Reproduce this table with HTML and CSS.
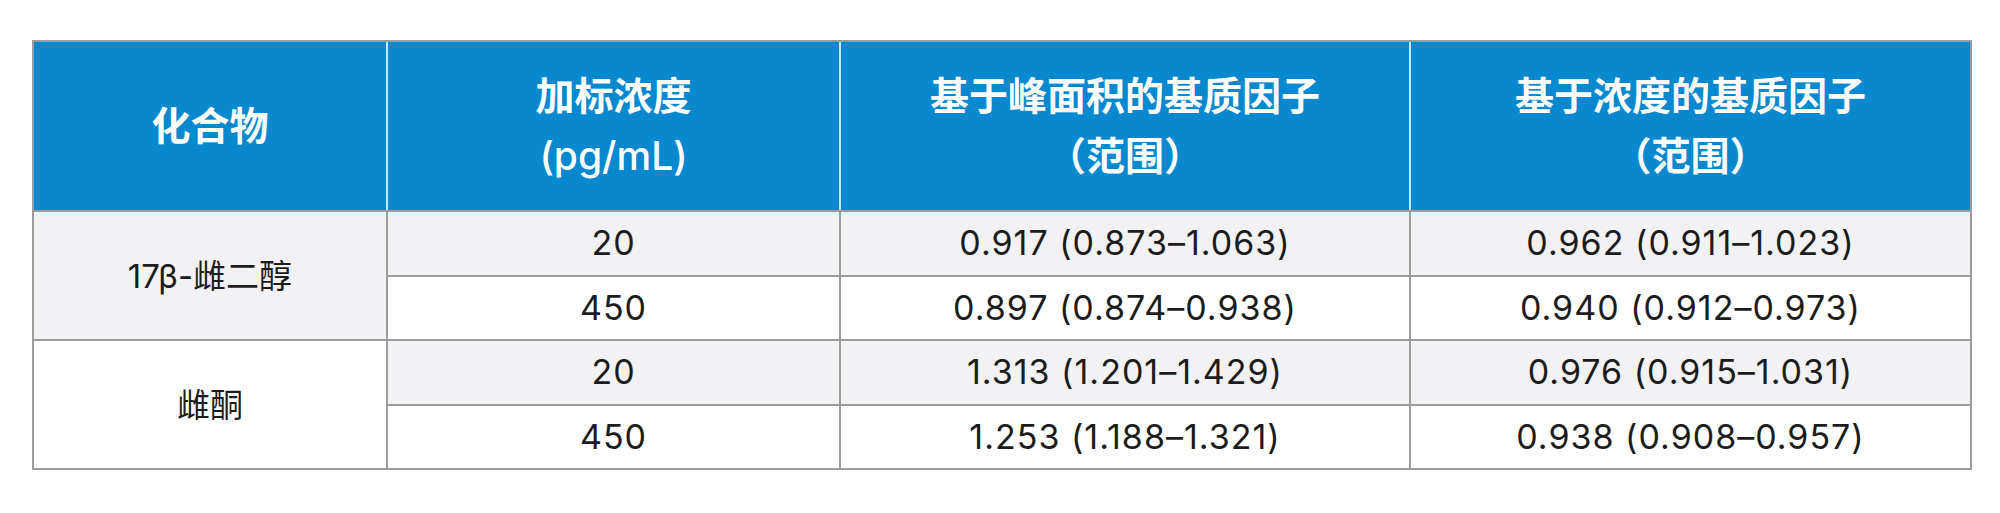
FILE: index.html
```html
<!DOCTYPE html>
<html lang="zh-CN">
<head>
<meta charset="utf-8">
<title>基质因子</title>
<link rel="stylesheet" href="styles.css">
</head>
<body>
<table class="mf">
  <colgroup>
    <col class="c1"><col class="c2"><col class="c3"><col class="c4">
  </colgroup>
  <thead>
    <tr class="head">
      <th>化合物</th>
      <th>加标浓度<br><span class="unit">(pg/mL)</span></th>
      <th>基于峰面积的基质因子<br>（范围）</th>
      <th>基于浓度的基质因子<br>（范围）</th>
    </tr>
  </thead>
  <tbody>
    <tr class="shade">
      <td rowspan="2" class="name">17β-雌二醇</td>
      <td class="num">20</td>
      <td class="num">0.917 (0.873–1.063)</td>
      <td class="num">0.962 (0.911–1.023)</td>
    </tr>
    <tr>
      <td class="num">450</td>
      <td class="num">0.897 (0.874–0.938)</td>
      <td class="num">0.940 (0.912–0.973)</td>
    </tr>
    <tr class="shade">
      <td rowspan="2" class="name plain">雌酮</td>
      <td class="num">20</td>
      <td class="num">1.313 (1.201–1.429)</td>
      <td class="num">0.976 (0.915–1.031)</td>
    </tr>
    <tr>
      <td class="num">450</td>
      <td class="num">1.253 (1.188–1.321)</td>
      <td class="num">0.938 (0.908–0.957)</td>
    </tr>
  </tbody>
</table>
</body>
</html>
```
FILE: styles.css
```css
html, body {
  margin: 0;
  padding: 0;
  background: #ffffff;
}
body {
  padding: 40px 0 0 32px;
  font-family: Inter, "Noto Sans CJK SC", sans-serif;
}
.mf {
  border-collapse: collapse;
  table-layout: fixed;
  width: 1938px;
  border: 2px solid #9c9c9c;
}
.c1 { width: 354px; }
.c2 { width: 453px; }
.c3 { width: 570px; }
.c4 { width: 561px; }
.head {
  height: 170px;
  background: #0788cf;
}
.head th {
  color: #ffffff;
  font-size: 39px;
  font-weight: 700;
  line-height: 60px;
  text-align: center;
  vertical-align: middle;
  padding: 0;
  border-left: 2px solid #c4e8f8;
  border-bottom: 2px solid #9c9c9c;
  border-top: 2px solid #9c9c9c;
}
.head th:first-child {
  border-left: 2px solid #9c9c9c;
}
.unit {
  font-weight: 500;
}
tbody tr {
  height: 64.5px;
  background: #ffffff;
}
tbody tr.shade {
  background: #f2f2f4;
}
tbody td {
  font-size: 33px;
  color: #1c1c1c;
  text-align: center;
  vertical-align: middle;
  padding: 0;
  border: 2px solid #9c9c9c;
  line-height: 40px;
}
tbody td.num {
  font-size: 34px;
  letter-spacing: 1px;
}
tbody td.name {
  background: #f2f2f4;
}
tbody td.name.plain {
  background: #ffffff;
}
```
